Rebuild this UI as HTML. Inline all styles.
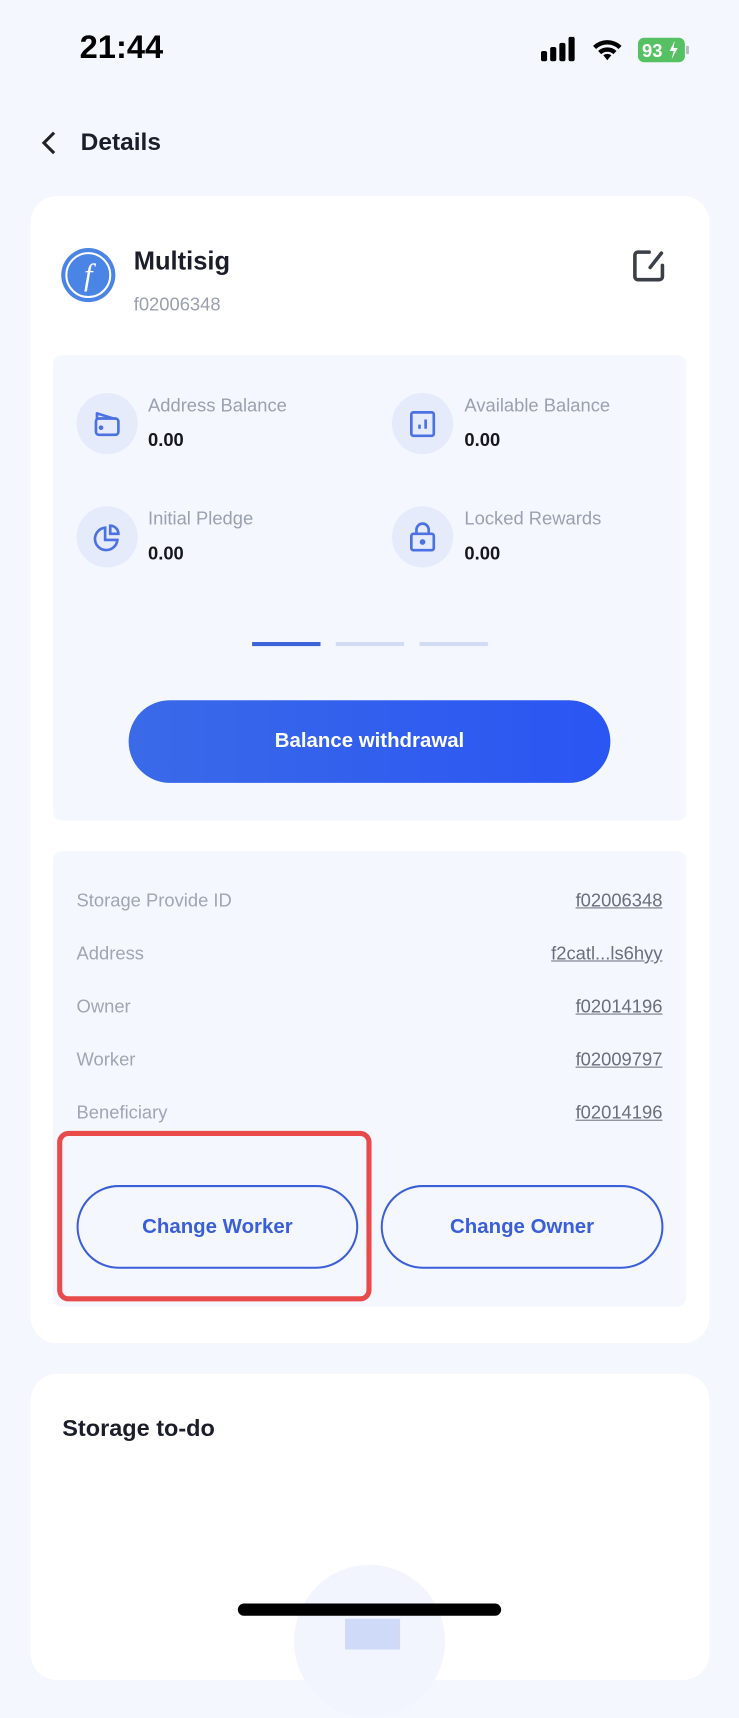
<!DOCTYPE html>
<html><head><meta charset="utf-8"><style>
*{margin:0;padding:0;box-sizing:border-box}
body{width:739px;height:1600px;overflow:hidden;background:#f4f7fe;font-family:"Liberation Sans",sans-serif;position:relative}
#w{position:absolute;left:0;top:0;width:724px;height:1568px;transform:scale(1.0207);transform-origin:0 0}
.a{position:absolute}
.lbl{color:#9aa0b0;font-size:18px}
.val{color:#15161e;font-size:18px;font-weight:bold}
.ic{width:60px;height:60px;border-radius:50%;background:#e5ebfb}
.row{left:75px;right:75px;font-size:18px}
.row span{position:absolute;left:0;color:#a0a5b3}
.row u{position:absolute;right:0;color:#6a6f7c;text-decoration:underline}
.ob{height:82px;border:2px solid #3a5fd8;border-radius:41px;color:#3a5fd8;font-weight:bold;font-size:20px;display:flex;align-items:center;justify-content:center}
</style></head><body><div id="w">
<div class="a" style="left:78px;top:28px;font-size:32px;font-weight:bold;color:#000">21:44</div>
<svg class="a" style="left:530px;top:36px" width="150" height="26">
<g fill="#000"><rect x="0" y="14" width="6" height="10" rx="2"/><rect x="9" y="10" width="6" height="14" rx="2"/><rect x="18" y="6" width="6" height="18" rx="2"/><rect x="27" y="0" width="6" height="24" rx="2"/>
<path d="M65 23 l-4-5 a7 7 0 0 1 8 0z M56 14 a13 13 0 0 1 18 0 l-3 3 a9 9 0 0 0 -12 0z M51 9 a20 20 0 0 1 28 0 l-3 3 a16 16 0 0 0 -22 0z"/></g>
<rect x="95" y="1" width="46" height="24" rx="6" fill="#55c163"/><rect x="142" y="9" width="3" height="8" rx="1" fill="#bbb"/>
<text x="99" y="20" font-size="18" font-weight="bold" fill="#fff" font-family="Liberation Sans">93</text><path d="M131 4 l-5 10 h4 l-2 8 l6-11 h-4z" fill="#fff"/></svg>
<svg class="a" style="left:38px;top:127px" width="20" height="26"><path d="M15 3 L5 13 L15 23" stroke="#222" stroke-width="3" fill="none"/></svg>
<div class="a" style="left:79px;top:126px;font-size:24px;font-weight:bold;color:#1c1d2a">Details</div>

<div class="a" style="left:30px;top:192px;width:665px;height:1124px;background:#fff;border-radius:26px"></div>
<div class="a" style="left:60px;top:243px;width:53px;height:53px;border-radius:50%;background:#4a84e4"><div style="position:absolute;inset:4px;border:2px solid #fff;border-radius:50%;color:#fff;font-family:'Liberation Serif',serif;font-style:italic;font-size:30px;text-align:center;line-height:42px">f</div></div>
<div class="a" style="left:131px;top:242px;font-size:25px;font-weight:bold;color:#1c1d2a">Multisig</div>
<div class="a" style="left:131px;top:288px;font-size:18px;color:#9aa0b0">f02006348</div>
<svg class="a" style="left:618px;top:242px" width="36" height="36"><path d="M18 5 H7 a3 3 0 0 0 -3 3 V29 a3 3 0 0 0 3 3 H28 a3 3 0 0 0 3 -3 V18 M19 20 L30 6" stroke="#3b3f48" stroke-width="3.5" fill="none" stroke-linecap="round"/></svg>

<div class="a" style="left:52px;top:348px;width:620px;height:456px;background:#f4f7fe;border-radius:8px"></div>
<div class="a ic" style="left:75px;top:385px"></div><div class="a ic" style="left:384px;top:385px"></div>
<div class="a ic" style="left:75px;top:496px"></div><div class="a ic" style="left:384px;top:496px"></div>
<svg class="a" style="left:91px;top:401px" width="28" height="28" fill="none" stroke="#4b72e0" stroke-width="2.6" stroke-linejoin="round"><rect x="3" y="9" width="22" height="16" rx="3"/><path d="M4 10 V4 L20 9"/><circle cx="8" cy="18" r="1" fill="#4b72e0"/></svg>
<svg class="a" style="left:400px;top:401px" width="28" height="28" fill="none" stroke="#4b72e0" stroke-width="2.6"><rect x="3" y="3" width="22" height="23" rx="2"/><path d="M11 19 V15 M17 19 V10"/></svg>
<svg class="a" style="left:90px;top:512px" width="30" height="30" fill="none" stroke="#4b72e0" stroke-width="2.6"><path d="M13 5 A11 11 0 1 0 25 17 H13z"/><path d="M18 3 V11 H26 A8 8 0 0 0 18 3z"/></svg>
<svg class="a" style="left:400px;top:510px" width="28" height="32" fill="none" stroke="#4b72e0" stroke-width="2.6"><path d="M8 13 V9 a6 6 0 0 1 12 0 V13"/><rect x="3" y="13" width="22" height="16" rx="2"/><circle cx="14" cy="21" r="1.5" fill="#4b72e0"/></svg>
<div class="a lbl" style="left:145px;top:387px">Address Balance</div><div class="a val" style="left:145px;top:421px">0.00</div>
<div class="a lbl" style="left:455px;top:387px">Available Balance</div><div class="a val" style="left:455px;top:421px">0.00</div>
<div class="a lbl" style="left:145px;top:498px">Initial Pledge</div><div class="a val" style="left:145px;top:532px">0.00</div>
<div class="a lbl" style="left:455px;top:498px">Locked Rewards</div><div class="a val" style="left:455px;top:532px">0.00</div>
<div class="a" style="left:247px;top:629px;width:67px;height:4px;background:#3c63d8"></div>
<div class="a" style="left:329px;top:629px;width:67px;height:4px;background:#d3dcf5"></div>
<div class="a" style="left:411px;top:629px;width:67px;height:4px;background:#d3dcf5"></div>
<div class="a" style="left:126px;top:686px;width:472px;height:81px;border-radius:41px;background:linear-gradient(90deg,#3a6ae8,#2a55f3);color:#fff;font-weight:bold;font-size:20px;display:flex;align-items:center;justify-content:center">Balance withdrawal</div>

<div class="a" style="left:52px;top:834px;width:620px;height:446px;background:#f4f7fe;border-radius:8px"></div>
<div class="a row" style="top:872px"><span>Storage Provide ID</span><u>f02006348</u></div>
<div class="a row" style="top:924px"><span>Address</span><u>f2catl...ls6hyy</u></div>
<div class="a row" style="top:976px"><span>Owner</span><u>f02014196</u></div>
<div class="a row" style="top:1028px"><span>Worker</span><u>f02009797</u></div>
<div class="a row" style="top:1080px"><span>Beneficiary</span><u>f02014196</u></div>
<div class="a ob" style="left:75px;top:1161px;width:276px">Change Worker</div>
<div class="a ob" style="left:373px;top:1161px;width:277px">Change Owner</div>
<div class="a" style="left:56px;top:1108px;width:308px;height:167px;border:5px solid #e94a4a;border-radius:11px"></div>

<div class="a" style="left:30px;top:1346px;width:665px;height:300px;background:#fff;border-radius:26px"></div>
<div class="a" style="left:61px;top:1386px;font-size:23px;font-weight:bold;color:#1c1d2a">Storage to-do</div>
<div class="a" style="left:288px;top:1533px;width:148px;height:150px;border-radius:50%;background:#f2f5fd"></div>
<div class="a" style="left:338px;top:1586px;width:54px;height:30px;background:#cfdaf9"></div>
<div class="a" style="left:233px;top:1571px;width:258px;height:12px;border-radius:6px;background:#000"></div>
</div></body></html>
